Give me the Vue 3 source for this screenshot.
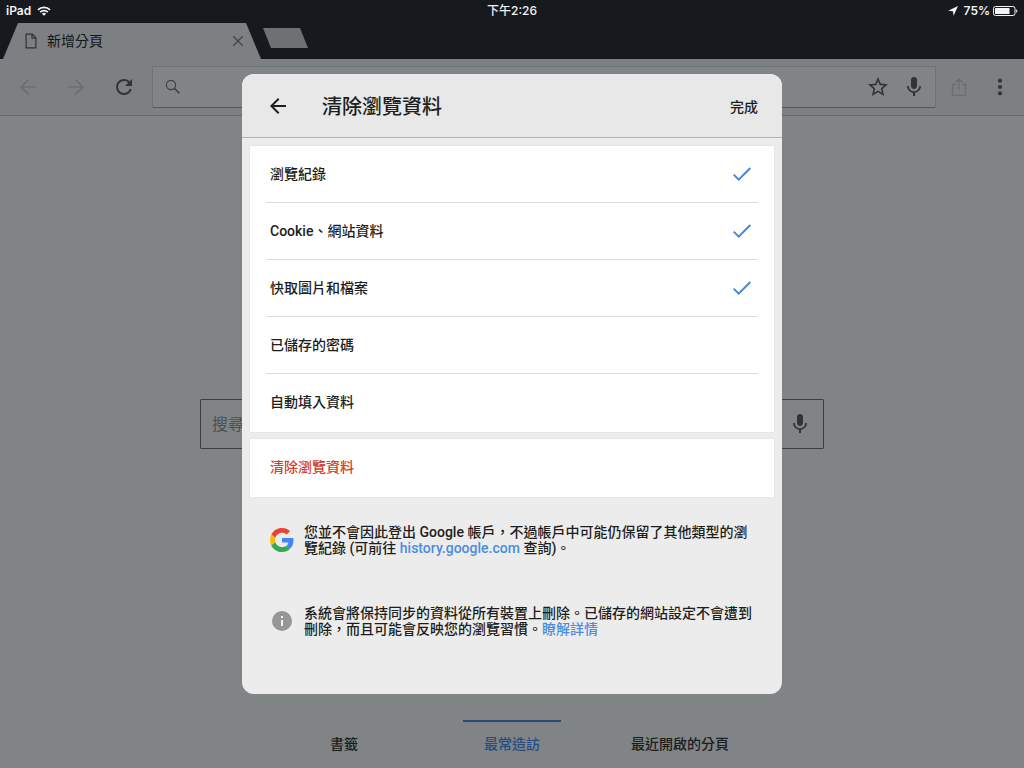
<script setup>
import { ref } from 'vue'

const items = ref([
  { id: 'history', label: '瀏覽紀錄', checked: true },
  { id: 'cookies', label: 'Cookie、網站資料', checked: true },
  { id: 'cache', label: '快取圖片和檔案', checked: true },
  { id: 'passwords', label: '已儲存的密碼', checked: false },
  { id: 'autofill', label: '自動填入資料', checked: false },
])
const panels = ['書籤', '最常造訪', '最近開啟的分頁']
const activePanel = ref('最常造訪')
const address = ref('')
const query = ref('')
</script>

<template>
  <div class="screen" lang="zh-TW">
    <header class="strip">
      <div class="status">
        <span class="status-side">
          iPad
          <svg width="14" height="10" viewBox="0 0 14 10" fill="none" stroke="currentColor" stroke-width="1.8">
            <path d="M1 3.8a8.6 8.6 0 0 1 12 0M3.2 6.2a5.4 5.4 0 0 1 7.6 0" />
            <path d="M7 9.8 4.9 7.7a3 3 0 0 1 4.2 0z" fill="currentColor" stroke="none" />
          </svg>
        </span>
        <span class="clock">下午2:26</span>
        <span class="status-side status-end">
          <svg width="10" height="10" viewBox="0 0 10 10"><path d="M10 0 5.6 9.8 4.9 5.2.2 4.8z" fill="currentColor" /></svg>
          75%
          <svg class="battery" width="25" height="10" viewBox="0 0 25 10">
            <rect x=".5" y=".5" width="21.5" height="9" rx="2" fill="none" stroke="currentColor" />
            <rect x="2" y="2" width="14.5" height="6" rx=".6" fill="currentColor" />
            <path d="M23.2 3.2c1.6.5 1.6 3.1 0 3.6z" fill="currentColor" />
          </svg>
        </span>
      </div>
      <div class="tabs">
        <div class="tab">
          <svg width="16" height="16" viewBox="0 0 16 16" fill="none" stroke="#303336" stroke-width="1.2">
            <path d="M3.1 1.1h6.2l3.6 3.7v10.1H3.1zM9 1.1v4h3.9" />
          </svg>
          <span class="tab-title">新增分頁</span>
          <button class="plain" aria-label="關閉分頁">
            <svg width="12" height="12" viewBox="0 0 12 12" stroke="#44484a" stroke-width="1.4"><path d="m1.3 1.3 9.4 9.4M10.7 1.3l-9.4 9.4" /></svg>
          </button>
        </div>
        <button class="new-tab" aria-label="開新分頁"></button>
      </div>
    </header>

    <nav class="toolbar">
      <button class="tool faint" aria-label="上一頁">
        <svg width="24" height="24" viewBox="0 0 24 24"><path d="M20 11.2H7.2l6-6L12 4l-8 8 8 8 1.2-1.2-6-6H20z" /></svg>
      </button>
      <button class="tool faint" aria-label="下一頁">
        <svg width="24" height="24" viewBox="0 0 24 24"><path d="m12 4-1.2 1.2 6 6H4v1.6h12.8l-6 6L12 20l8-8z" /></svg>
      </button>
      <button class="tool" aria-label="重新載入">
        <svg width="24" height="24" viewBox="0 0 24 24"><path d="M17.65 6.35A7.96 7.96 0 0 0 12 4a8 8 0 1 0 7.73 10h-2.08A6 6 0 1 1 12 6c1.66 0 3.14.69 4.22 1.78L13 11h7V4z" /></svg>
      </button>
      <div class="omnibox">
        <svg width="16" height="16" viewBox="0 0 16 16" fill="none" stroke="#3a3e40">
          <circle cx="6" cy="6" r="4.6" stroke-width="1.1" /><path d="m9.5 9.5 4.8 4.8" stroke-width="1.6" />
        </svg>
        <input v-model="address" type="text" aria-label="網址" />
        <button class="plain" aria-label="加入書籤">
          <svg width="24" height="24" viewBox="0 0 24 24"><path d="m22 9.24-7.19-.62L12 2 9.19 8.63 2 9.24l5.46 4.73L5.82 21 12 17.27 18.18 21l-1.63-7.03zM12 15.4l-3.76 2.27 1-4.28-3.32-2.88 4.38-.38L12 6.1l1.71 4.04 4.38.38-3.32 2.88 1 4.28z" /></svg>
        </button>
        <button class="plain" aria-label="語音搜尋">
          <svg width="24" height="24" viewBox="0 0 24 24"><path d="M12 14c1.66 0 3-1.34 3-3V5a3 3 0 0 0-6 0v6c0 1.66 1.34 3 3 3zM17.3 11a5.3 5.3 0 0 1-10.6 0H5c0 3.41 2.72 6.23 6 6.72V21h2v-3.28c3.28-.48 6-3.3 6-6.72z" /></svg>
        </button>
      </div>
      <button class="plain share" aria-label="分享">
        <svg width="24" height="24" viewBox="0 0 24 24" fill="none" stroke="#696e70" stroke-width="1.3"><path d="M9 9.5H5.5v10.8h13V9.5H15M12 15V3.8M8.8 7 12 3.8 15.2 7" /></svg>
      </button>
      <button class="plain" aria-label="更多選項">
        <svg width="24" height="24" viewBox="0 0 24 24"><circle cx="12" cy="5.7" r="2.1" /><circle cx="12" cy="12" r="2.1" /><circle cx="12" cy="18.3" r="2.1" /></svg>
      </button>
    </nav>

    <main class="page">
      <div class="search">
        <input v-model="query" type="text" placeholder="搜尋" aria-label="搜尋" />
        <button class="plain" aria-label="語音搜尋">
          <svg width="24" height="24" viewBox="0 0 24 24"><path d="M12 14c1.66 0 3-1.34 3-3V5a3 3 0 0 0-6 0v6c0 1.66 1.34 3 3 3zM17.3 11a5.3 5.3 0 0 1-10.6 0H5c0 3.41 2.72 6.23 6 6.72V21h2v-3.28c3.28-.48 6-3.3 6-6.72z" /></svg>
        </button>
      </div>
    </main>

    <nav class="panels">
      <button v-for="name in panels" :key="name" class="panel" :class="{ active: name === activePanel }" @click="activePanel = name">{{ name }}</button>
    </nav>

    <div class="overlay">
      <section class="dialog" role="dialog" aria-labelledby="dialog-title">
        <header class="dialog-head">
          <button class="plain" aria-label="返回">
            <svg width="24" height="24" viewBox="0 0 24 24"><path d="M20 11H7.8l5.6-5.6L12 4l-8 8 8 8 1.4-1.4L7.8 13H20z" /></svg>
          </button>
          <h1 id="dialog-title">清除瀏覽資料</h1>
          <button class="plain done">完成</button>
        </header>
        <div class="card">
          <label v-for="item in items" :key="item.id" class="row">
            <span>{{ item.label }}</span>
            <span class="check">
              <input v-model="item.checked" type="checkbox" />
              <svg v-if="item.checked" width="24" height="24" viewBox="0 0 24 24" fill="none" stroke="#4a86d4" stroke-width="2"><path d="m3.7 12.6 5 5L20.3 6" /></svg>
            </span>
          </label>
        </div>
        <div class="card">
          <button class="plain row clear">清除瀏覽資料</button>
        </div>
        <div class="note">
          <svg width="24" height="24" viewBox="0 0 48 48">
            <path fill="#ea4335" d="M24 9.5c3.54 0 6.71 1.22 9.21 3.6l6.85-6.85C35.9 2.38 30.47 0 24 0 14.62 0 6.51 5.38 2.56 13.22l7.98 6.19C12.43 13.72 17.74 9.5 24 9.5z" />
            <path fill="#4285f4" d="M46.98 24.55c0-1.57-.15-3.09-.38-4.55H24v9.02h12.94c-.58 2.96-2.26 5.48-4.78 7.18l7.73 6c4.51-4.18 7.09-10.36 7.09-17.65z" />
            <path fill="#fbbc05" d="M10.53 28.59A14.5 14.5 0 0 1 9.77 24c0-1.6.27-3.14.76-4.59l-7.98-6.19A23.9 23.9 0 0 0 0 24c0 3.88.92 7.54 2.56 10.78z" />
            <path fill="#34a853" d="M24 48c6.48 0 11.93-2.13 15.89-5.81l-7.73-6c-2.15 1.45-4.92 2.3-8.16 2.3-6.26 0-11.57-4.22-13.47-9.91l-7.98 6.19C6.51 42.62 14.62 48 24 48z" />
          </svg>
          <p>您並不會因此登出 Google 帳戶，不過帳戶中可能仍保留了其他類型的瀏覽紀錄 (可前往 <a href="#">history.google.com</a> 查詢)。</p>
        </div>
        <div class="note">
          <svg width="24" height="24" viewBox="0 0 24 24"><circle cx="12" cy="12" r="10" fill="#969696" /><path d="M11 7h2v2h-2zM11 11h2v6h-2z" fill="#f4f4f4" /></svg>
          <p>系統會將保持同步的資料從所有裝置上刪除。已儲存的網站設定不會遭到刪除，而且可能會反映您的瀏覽習慣。<a href="#">瞭解詳情</a></p>
        </div>
      </section>
    </div>
  </div>
</template>

<style>
body {
  margin: 0;
}
</style>

<style scoped>
.screen {
  min-height: 100vh;
  display: flex;
  flex-direction: column;
  background: #808485;
  color: #1c1e20;
  font: 500 14px/16px Roboto, "Noto Sans CJK TC", sans-serif;
}
.screen * {
  box-sizing: border-box;
}
svg {
  display: block;
  flex: none;
}
button,
input {
  font: inherit;
  color: inherit;
  border: 0;
  padding: 0;
  margin: 0;
  background: none;
}
.plain,
.tool {
  display: flex;
  align-items: center;
  justify-content: center;
  fill: #303436;
}
.strip {
  background: #161a1e;
}
.status {
  height: 23px;
  padding: 0 6px;
  display: grid;
  grid-template-columns: 1fr auto 1fr;
  align-items: start;
  color: #f2f3f4;
  font: 600 12px/20px Inter, "Noto Sans CJK TC", sans-serif;
}
.status-side,
.clock {
  display: flex;
  align-items: center;
  gap: 6px;
  height: 21px;
}
.clock {
  font-weight: 500;
}
.status-end {
  justify-content: flex-end;
}
.battery {
  margin-left: -3px;
}
.tabs {
  display: flex;
  height: 36px;
  padding-left: 3px;
}
.tab {
  width: 258px;
  display: flex;
  align-items: center;
  padding: 0 17px 0 20px;
  gap: 8px;
  background: #7c8082;
  clip-path: polygon(15px 0, 243px 0, 258px 100%, 0 100%);
}
.tab-title {
  flex: 1;
  font-weight: 400;
  color: #141618;
}
.new-tab {
  width: 45px;
  height: 20px;
  margin: 5px 0 0 2px;
  background: #6d7172;
  clip-path: polygon(0 0, 37px 0, 100% 100%, 8px 100%);
}
.toolbar {
  height: 57px;
  display: flex;
  align-items: center;
  padding: 0 12px 0 4px;
  background: #7c8082;
  border-bottom: 1px solid #66696b;
}
.tool {
  width: 48px;
  height: 48px;
}
.faint {
  fill: #6a6e70;
}
.omnibox {
  flex: 1;
  height: 42px;
  margin-left: 4px;
  padding: 0 9px 0 12px;
  display: flex;
  align-items: center;
  gap: 12px;
  background: #808485;
  border: 1px solid #6e7274;
  border-bottom-color: #56595b;
  border-radius: 2px;
}
.omnibox input {
  flex: 1;
  min-width: 0;
}
.share {
  margin: 0 17px 0 11px;
}
.page {
  flex: 1;
  display: flex;
  align-items: center;
  justify-content: center;
  padding-top: 12px;
}
.search {
  width: 624px;
  height: 50px;
  display: flex;
  align-items: center;
  padding: 0 11px;
  border: 1px solid #3c4042;
  border-radius: 1px;
}
.search input {
  flex: 1;
  min-width: 0;
  height: 24px;
  font-size: 16px;
  font-weight: 400;
}
.search input::placeholder {
  color: #4c5052;
  opacity: 1;
}
.panels {
  display: flex;
  justify-content: center;
  gap: 70px;
}
.panel {
  width: 98px;
  height: 48px;
  padding-bottom: 2px;
  border-top: 2px solid transparent;
  white-space: nowrap;
}
.panel.active {
  color: #264c86;
  border-top-color: #264c7c;
}
.overlay {
  position: fixed;
  inset: 0;
  display: flex;
  align-items: center;
  justify-content: center;
}
.dialog {
  width: 540px;
  max-width: 100%;
  padding-bottom: 57px;
  background: #ececec;
  border-radius: 12px;
  overflow: hidden;
}
.dialog-head {
  height: 64px;
  padding: 0 24px;
  display: flex;
  align-items: center;
  background: #e8e8e8;
  border-bottom: 1px solid #b4b4b4;
}
.dialog-head .plain {
  fill: #1c1e20;
}
.dialog-head .done {
  padding-top: 2px;
}
h1 {
  flex: 1;
  margin: 0 0 0 32px;
  padding-top: 2px;
  font-size: 20px;
  line-height: 24px;
  font-weight: 500;
}
.card {
  margin: 8px 8px 0;
  padding: 0 16px 1px;
  background: #fff;
  box-shadow: 0 0 1px rgba(0, 0, 0, 0.15);
}
.card + .card {
  margin-top: 7px;
}
.row {
  height: 57px;
  display: flex;
  align-items: center;
  justify-content: space-between;
  padding: 0 4px;
  border-bottom: 1px solid #dcdcdc;
}
.row:last-child {
  border-bottom-color: transparent;
}
.check {
  display: grid;
  width: 24px;
  height: 24px;
}
.check > * {
  grid-area: 1 / 1;
}
.check input {
  appearance: none;
  width: 24px;
  height: 24px;
}
.clear {
  width: 100%;
  color: #d0402f;
}
.note {
  display: flex;
  align-items: center;
  gap: 10px;
  padding: 0 24px 0 28px;
  margin-top: 49px;
}
.card + .note {
  margin-top: 27px;
}
.note p {
  margin: 0;
}
.note a {
  display: inline-block;
  color: #4a8de0;
  text-decoration: none;
}
</style>
